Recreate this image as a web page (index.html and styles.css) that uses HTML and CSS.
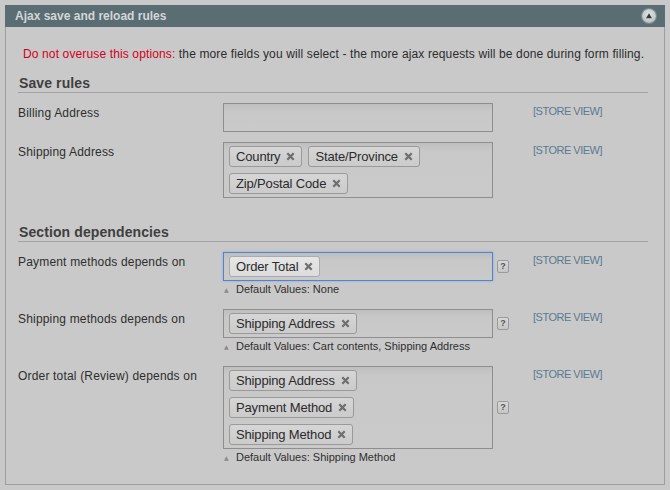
FILE: index.html
```html
<!DOCTYPE html>
<html>
<head>
<meta charset="utf-8">
<link rel="stylesheet" href="styles.css">
</head>
<body>
<div class="panel">
  <div class="head">
    <span class="title">Ajax save and reload rules</span>
    <span class="toggle"><svg width="14" height="14" viewBox="0 0 14 14"><path d="M7 4.2 L10 9.2 L4 9.2 Z" fill="#2f3b40"/></svg></span>
  </div>
  <div class="body">
    <p class="warn"><span class="red">Do not overuse this options:</span> the more fields you will select - the more ajax requests will be done during form filling.</p>

    <h3 class="sect">Save rules</h3>

    <div class="row">
      <div class="label">Billing Address</div>
      <div class="value">
        <div class="fieldline">
          <div class="box"></div>
          <div class="helpcol"></div>
        </div>
      </div>
      <div class="scope">[STORE VIEW]</div>
    </div>

    <div class="row">
      <div class="label">Shipping Address</div>
      <div class="value">
        <div class="fieldline">
          <div class="box">
            <span class="tag">Country<i class="x"><svg width="9" height="9" viewBox="0 0 9 9"><path d="M1.3 1.3 L7.7 7.7 M7.7 1.3 L1.3 7.7"/></svg></i></span>
            <span class="tag">State/Province<i class="x"><svg width="9" height="9" viewBox="0 0 9 9"><path d="M1.3 1.3 L7.7 7.7 M7.7 1.3 L1.3 7.7"/></svg></i></span>
            <span class="tag">Zip/Postal Code<i class="x"><svg width="9" height="9" viewBox="0 0 9 9"><path d="M1.3 1.3 L7.7 7.7 M7.7 1.3 L1.3 7.7"/></svg></i></span>
          </div>
          <div class="helpcol"></div>
        </div>
      </div>
      <div class="scope">[STORE VIEW]</div>
    </div>

    <h3 class="sect sect2">Section dependencies</h3>

    <div class="row">
      <div class="label">Payment methods depends on</div>
      <div class="value">
        <div class="fieldline">
          <div class="box focus">
            <span class="tag active">Order Total<i class="x"><svg width="9" height="9" viewBox="0 0 9 9"><path d="M1.3 1.3 L7.7 7.7 M7.7 1.3 L1.3 7.7"/></svg></i></span>
          </div>
          <div class="helpcol"><span class="help">?</span></div>
        </div>
        <div class="note"><span class="tri">&#9650;</span>Default Values: None</div>
      </div>
      <div class="scope">[STORE VIEW]</div>
    </div>

    <div class="row">
      <div class="label">Shipping methods depends on</div>
      <div class="value">
        <div class="fieldline">
          <div class="box">
            <span class="tag">Shipping Address<i class="x"><svg width="9" height="9" viewBox="0 0 9 9"><path d="M1.3 1.3 L7.7 7.7 M7.7 1.3 L1.3 7.7"/></svg></i></span>
          </div>
          <div class="helpcol"><span class="help">?</span></div>
        </div>
        <div class="note"><span class="tri">&#9650;</span>Default Values: Cart contents, Shipping Address</div>
      </div>
      <div class="scope">[STORE VIEW]</div>
    </div>

    <div class="row">
      <div class="label">Order total (Review) depends on</div>
      <div class="value">
        <div class="fieldline">
          <div class="box column">
            <span class="tag">Shipping Address<i class="x"><svg width="9" height="9" viewBox="0 0 9 9"><path d="M1.3 1.3 L7.7 7.7 M7.7 1.3 L1.3 7.7"/></svg></i></span>
            <span class="tag">Payment Method<i class="x"><svg width="9" height="9" viewBox="0 0 9 9"><path d="M1.3 1.3 L7.7 7.7 M7.7 1.3 L1.3 7.7"/></svg></i></span>
            <span class="tag">Shipping Method<i class="x"><svg width="9" height="9" viewBox="0 0 9 9"><path d="M1.3 1.3 L7.7 7.7 M7.7 1.3 L1.3 7.7"/></svg></i></span>
          </div>
          <div class="helpcol"><span class="help">?</span></div>
        </div>
        <div class="note"><span class="tri">&#9650;</span>Default Values: Shipping Method</div>
      </div>
      <div class="scope">[STORE VIEW]</div>
    </div>
  </div>
</div>
</body>
</html>
```

FILE: styles.css
```css
* { box-sizing: border-box; }
html, body { margin: 0; padding: 0; }
body {
  background: #c9c9c9;
  font-family: "Liberation Sans", Arial, sans-serif;
  font-size: 12px;
  color: #2e2e2e;
  width: 670px;
  height: 490px;
  overflow: hidden;
}
.panel {
  margin: 5px 5px 0 5px;
  width: 660px;
}
.head {
  height: 22px;
  background: #596d73;
  display: flex;
  align-items: center;
  justify-content: space-between;
  padding: 0 9px 0 10px;
}
.title {
  color: #d2d6d7;
  font-weight: bold;
  font-size: 12px;
  line-height: 21px;
}
.toggle {
  width: 14px;
  height: 14px;
  border-radius: 50%;
  background: radial-gradient(circle at 50% 40%, #e2e5e6 0%, #c3c9cb 60%, #9aa4a7 100%);
  box-shadow: 0 0 0 1px #7d8b8f;
  display: flex;
}
.body {
  border: 1px solid #9d9d9d;
  border-top: 0;
  padding: 20px 16px 17px 12px;
}
.warn {
  margin: 0 0 12px 5px;
  line-height: 15px;
  color: #2c2c2c;
  letter-spacing: 0.13px;
  white-space: nowrap;
}
.red { color: #d2001c; }
.sect {
  margin: 0;
  font-size: 14px;
  line-height: 18px;
  font-weight: bold;
  color: #3f3f3f;
  border-bottom: 1px solid #a2a2a2;
  padding-left: 1px;
  letter-spacing: 0.1px;
}
.sect2 { margin-top: 25px; }
.row {
  display: flex;
  align-items: flex-start;
  margin-top: 10px;
}
.label {
  width: 205px;
  padding-top: 3px;
  line-height: 15px;
  color: #2e2e2e;
  letter-spacing: 0.18px;
}
.value {
  width: 310px;
  display: flex;
  flex-direction: column;
}
.fieldline {
  display: flex;
  align-items: center;
}
.box {
  width: 270px;
  min-height: 29px;
  border: 1px solid #8e8e8e;
  background: linear-gradient(#bfbfbf 0px, #c8c8c8 8px, #cacaca 100%);
  padding: 3px 5px;
  display: flex;
  flex-wrap: wrap;
  gap: 6px 6px;
  align-content: flex-start;
}
.box.column {
  flex-direction: column;
  align-items: flex-start;
}
.box.focus {
  border-color: #4f84d4;
  box-shadow: 0 0 2px rgba(79,132,212,0.5);
}
.tag {
  display: inline-flex;
  align-items: center;
  height: 21px;
  line-height: 19px;
  border: 1px solid #9a9a9a;
  border-radius: 3px;
  background: linear-gradient(#d6d6d6, #cbcbcb);
  padding: 0 6px 0 6px;
  font-size: 13px;
  letter-spacing: -0.15px;
  color: #2b2b2b;
}
.tag.active {
  background: linear-gradient(#e6e6e6, #dcdcdc);
  border-color: #ababab;
}
.x {
  display: inline-flex;
  margin-left: 6px;
  width: 9px;
  height: 9px;
}
.x path {
  stroke: #6f6f6f;
  stroke-width: 2.3;
  fill: none;
}
.helpcol {
  width: 40px;
  display: flex;
  padding-left: 4px;
}
.help {
  width: 12px;
  height: 13px;
  border: 1px solid #9a9a9a;
  border-radius: 2px;
  background: linear-gradient(#d8d8d8, #c6c6c6);
  font-size: 9px;
  font-weight: bold;
  line-height: 11px;
  text-align: center;
  color: #555;
  letter-spacing: 0;
}
.note {
  margin-top: 2px;
  margin-bottom: 3px;
  font-size: 11px;
  line-height: 13px;
  color: #2f2f2f;
  display: flex;
  align-items: center;
}
.tri {
  font-family: "DejaVu Sans", sans-serif;
  font-size: 6px;
  color: #8a8a8a;
  width: 13px;
  padding-left: 1px;
  line-height: 13px;
}
.scope {
  padding-top: 2px;
  font-size: 11px;
  line-height: 13px;
  letter-spacing: -0.5px;
  color: #5a7b90;
}
```
